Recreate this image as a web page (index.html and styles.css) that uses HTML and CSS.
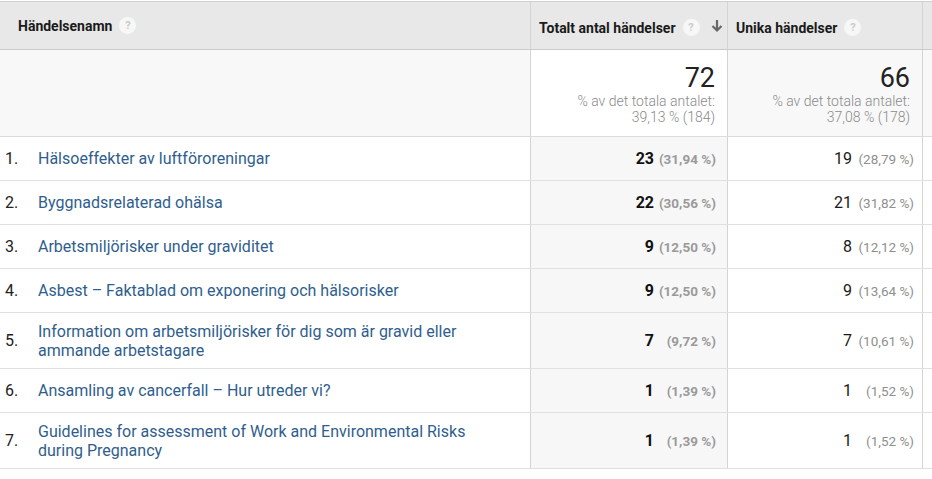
FILE: index.html
```html
<!DOCTYPE html>
<html lang="sv">
<head>
<meta charset="utf-8">
<link rel="stylesheet" href="styles.css">
</head>
<body>
<div class="report">
  <div class="row head">
    <div class="cell name-h">Händelsenamn <span class="help">?</span></div>
    <div class="cell metric-h sorted-h">Totalt antal händelser <span class="help">?</span>
      <svg class="arrow" width="12" height="14" viewBox="0 0 12 14"><path d="M6 1v10M1.5 7l4.5 4.5L10.5 7" fill="none" stroke="#666" stroke-width="2.2"/></svg>
    </div>
    <div class="cell metric-h">Unika händelser <span class="help">?</span></div>
    <div class="cell extra"></div>
  </div>
  <div class="row summary">
    <div class="cell"></div>
    <div class="cell total white">
      <div class="big">72</div>
      <div class="sub">% av det totala antalet:<br>39,13 % (184)</div>
    </div>
    <div class="cell total">
      <div class="big">66</div>
      <div class="sub">% av det totala antalet:<br>37,08 % (178)</div>
    </div>
    <div class="cell extra"></div>
  </div>

  <div class="row data">
    <div class="cell name"><span class="idx">1.</span><a class="link">Hälsoeffekter av luftföroreningar</a></div>
    <div class="cell val sorted"><b class="num">23</b><span class="pct">(31,94 %)</span></div>
    <div class="cell val"><span class="num">19</span><span class="pct">(28,79 %)</span></div>
    <div class="cell extra"></div>
  </div>
  <div class="row data">
    <div class="cell name"><span class="idx">2.</span><a class="link">Byggnadsrelaterad ohälsa</a></div>
    <div class="cell val sorted"><b class="num">22</b><span class="pct">(30,56 %)</span></div>
    <div class="cell val"><span class="num">21</span><span class="pct">(31,82 %)</span></div>
    <div class="cell extra"></div>
  </div>
  <div class="row data">
    <div class="cell name"><span class="idx">3.</span><a class="link">Arbetsmiljörisker under graviditet</a></div>
    <div class="cell val sorted"><b class="num">9</b><span class="pct">(12,50 %)</span></div>
    <div class="cell val"><span class="num">8</span><span class="pct">(12,12 %)</span></div>
    <div class="cell extra"></div>
  </div>
  <div class="row data">
    <div class="cell name"><span class="idx">4.</span><a class="link">Asbest – Faktablad om exponering och hälsorisker</a></div>
    <div class="cell val sorted"><b class="num">9</b><span class="pct">(12,50 %)</span></div>
    <div class="cell val"><span class="num">9</span><span class="pct">(13,64 %)</span></div>
    <div class="cell extra"></div>
  </div>
  <div class="row data tall">
    <div class="cell name"><span class="idx">5.</span><a class="link">Information om arbetsmiljörisker för dig som är gravid eller<br>ammande arbetstagare</a></div>
    <div class="cell val sorted"><b class="num">7</b><span class="pct">(9,72 %)</span></div>
    <div class="cell val"><span class="num">7</span><span class="pct">(10,61 %)</span></div>
    <div class="cell extra"></div>
  </div>
  <div class="row data">
    <div class="cell name"><span class="idx">6.</span><a class="link">Ansamling av cancerfall – Hur utreder vi?</a></div>
    <div class="cell val sorted"><b class="num">1</b><span class="pct">(1,39 %)</span></div>
    <div class="cell val"><span class="num">1</span><span class="pct">(1,52 %)</span></div>
    <div class="cell extra"></div>
  </div>
  <div class="row data tall">
    <div class="cell name"><span class="idx">7.</span><a class="link">Guidelines for assessment of Work and Environmental Risks<br>during Pregnancy</a></div>
    <div class="cell val sorted"><b class="num">1</b><span class="pct">(1,39 %)</span></div>
    <div class="cell val"><span class="num">1</span><span class="pct">(1,52 %)</span></div>
    <div class="cell extra"></div>
  </div>
</div>
</body>
</html>
```

FILE: styles.css
```css
html, body {
  margin: 0;
  padding: 0;
  background: #ffffff;
}
body {
  font-family: Roboto, "Liberation Sans", Arial, sans-serif;
  color: #222;
}
.report {
  margin-top: 1px;
  width: 960px;
}
.row {
  display: grid;
  grid-template-columns: 530px 197px 195px 38px;
  border-bottom: 1px solid #e0e0e0;
}
.cell + .cell {
  border-left: 1px solid #d4d4d4;
}
.head {
  border-top: 1px solid #cfcfcf;
  border-bottom: 1px solid #cacaca;
  background: #e8e8e8;
  height: 47px;
}
.head .cell {
  display: flex;
  align-items: center;
  font-size: 14px;
  font-weight: 700;
  color: #1a1a1a;
}
.name-h {
  padding-left: 18px;
}
.metric-h {
  padding-left: 8px;
  padding-top: 4px;
}
.sorted-h {
  padding-left: 8px;
}
.help {
  display: inline-flex;
  align-items: center;
  justify-content: center;
  width: 17px;
  height: 17px;
  border-radius: 50%;
  background: #f7f7f7;
  color: #cacaca;
  font-size: 11px;
  font-weight: 700;
  margin-left: 7px;
}
.arrow {
  margin-left: 11px;
  margin-top: -4px;
}
.summary {
  height: 86px;
  border-bottom: 1px solid #dcdcdc;
}
.summary .cell {
  background: #f8f8f8;
}
.summary .cell.white {
  background: #ffffff;
}
.total {
  text-align: right;
  padding-right: 12px;
}
.big {
  font-size: 27px;
  line-height: 30px;
  margin-top: 13px;
  color: #222;
}
.sub {
  font-size: 14px;
  line-height: 16px;
  font-weight: 300;
  color: #8a8a8a;
}
.data {
  height: 43px;
}
.data.tall {
  height: 55px;
}
.data .cell {
  display: flex;
  align-items: center;
}
.name {
  font-size: 16px;
  line-height: 19px;
}
.idx {
  width: 38px;
  flex: none;
  padding-left: 5px;
  box-sizing: border-box;
  color: #222;
}
.link {
  color: #2f5e8e;
  text-decoration: none;
}
.val {
  justify-content: flex-end;
  padding-right: 11px;
  font-size: 16px;
}
.val.sorted {
  background: #f7f7f7;
}
.val:not(.sorted) {
  padding-right: 8px;
}
.num {
  color: #1a1a1a;
}
b.num {
  font-weight: 700;
  color: #111;
}
.pct {
  width: 62px;
  text-align: right;
  font-size: 13.5px;
  color: #8f8f8f;
}
.sorted .pct {
  font-weight: 700;
  color: #9a9a9a;
}
.extra {
  background: transparent;
}
.head .extra {
  background: #e8e8e8;
}
```
